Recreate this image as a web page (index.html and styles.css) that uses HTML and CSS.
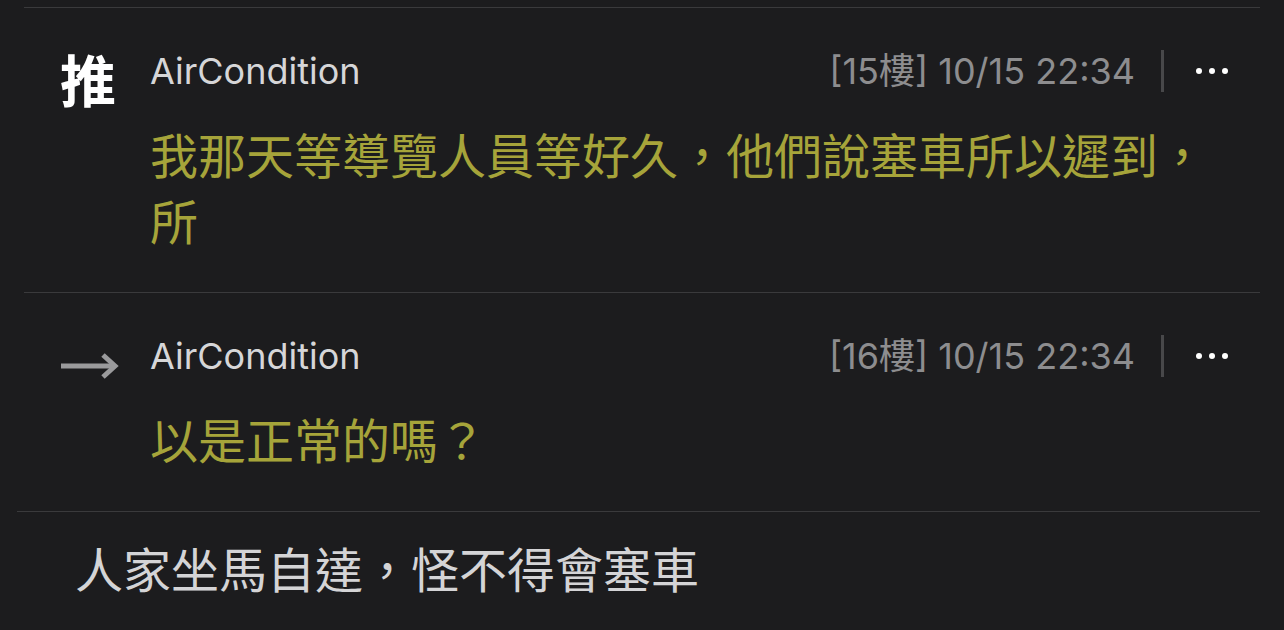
FILE: index.html
```html
<!DOCTYPE html>
<html lang="zh-Hant">
<head>
  <meta charset="UTF-8" />
  <meta name="viewport" content="width=device-width, initial-scale=1.0"/>
  <title>留言</title>
  <link rel="stylesheet" href="styles.css">
</head>
<body>
  <div class="comments">
    <div class="comment">
      <div class="tag tag-push">推</div>
      <div class="comment-main">
        <div class="comment-head">
          <span class="author">AirCondition</span>
          <span class="meta">[15樓] 10/15 22:34</span>
          <span class="sep"></span>
          <span class="more"><i></i><i></i><i></i></span>
        </div>
        <p class="comment-text">我那天等導覽人員等好久，他們說塞車所以遲到，所</p>
      </div>
    </div>

    <div class="comment">
      <div class="tag tag-arrow">
        <svg width="60" height="30" viewBox="0 0 60 30">
          <path d="M1 15 H54" stroke="#9a9a9c" stroke-width="5" fill="none"/>
          <path d="M43 4 L55 15 L43 26" stroke="#9a9a9c" stroke-width="5" fill="none"/>
        </svg>
      </div>
      <div class="comment-main">
        <div class="comment-head">
          <span class="author">AirCondition</span>
          <span class="meta">[16樓] 10/15 22:34</span>
          <span class="sep"></span>
          <span class="more"><i></i><i></i><i></i></span>
        </div>
        <p class="comment-text">以是正常的嗎？</p>
      </div>
    </div>

    <div class="reply">
      <p class="reply-text">人家坐馬自達，怪不得會塞車</p>
    </div>
  </div>
</body>
</html>
```

FILE: styles.css
```css
body {
  margin: 0;
  background: #1c1c1e;
  font-family: Inter, "Noto Sans CJK TC", sans-serif;
  overflow: hidden;
}

.comments {
  padding-top: 7px;
}

.comment {
  margin: 0 24px;
  border-top: 1px solid #3a3a3c;
  padding: 40px 0 40px;
  display: grid;
  grid-template-columns: 126px 1fr;
}

.tag {
  padding-left: 36px;
}

.tag-push {
  color: #ffffff;
  font-size: 56px;
  font-weight: 700;
  line-height: 1;
  padding-top: 2px;
  font-family: "Noto Sans CJK TC", sans-serif;
}

.tag-arrow svg {
  display: block;
  margin-top: 18px;
}

.comment-head {
  display: flex;
  align-items: center;
  height: 46px;
}

.author {
  color: #d6d6d8;
  font-size: 36px;
  line-height: 44px;
  flex: 1;
}

.meta {
  color: #8d8d8f;
  font-size: 36px;
  line-height: 44px;
}

.sep {
  width: 3px;
  height: 42px;
  background: #48484a;
  margin: 0 32px 0 26px;
}

.more {
  display: flex;
  gap: 7px;
  margin-right: 32px;
}

.more i {
  width: 6px;
  height: 6px;
  border-radius: 50%;
  background: #ffffff;
}

.comment-text {
  margin: 26px 0 0;
  color: #a6a43a;
  font-size: 48px;
  line-height: 66px;
  font-family: "Noto Sans CJK TC", sans-serif;
  padding-right: 30px;
}

.reply {
  margin: 0 24px 0 17px;
  border-top: 1px solid #3a3a3c;
  padding: 22px 0 0 58px;
}

.reply-text {
  margin: 0;
  color: #d4d4d6;
  font-size: 48px;
  line-height: 66px;
  font-family: "Noto Sans CJK TC", sans-serif;
}
```
